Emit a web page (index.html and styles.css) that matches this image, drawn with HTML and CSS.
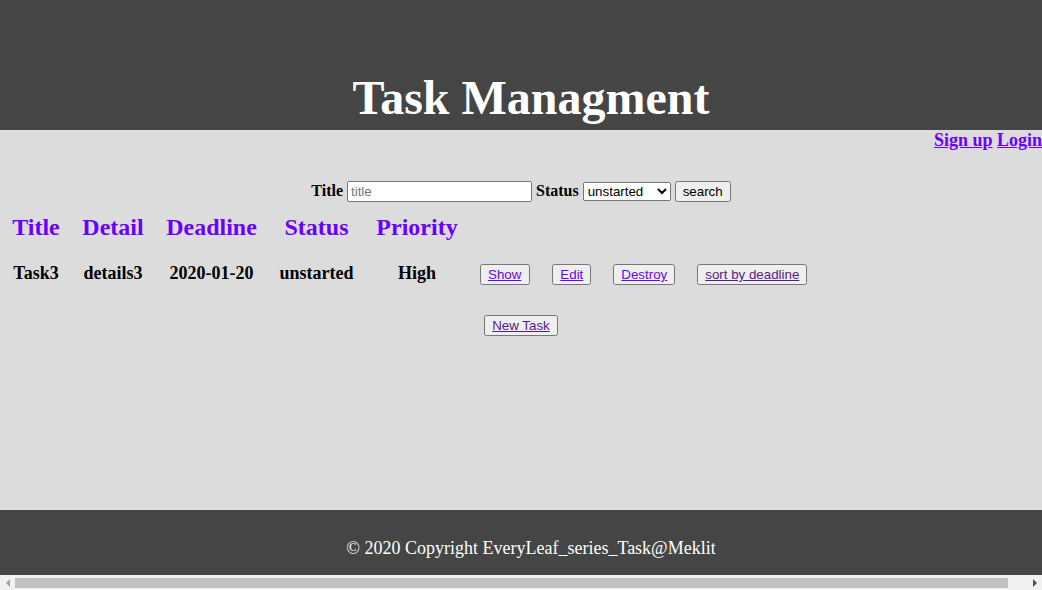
FILE: index.html
```html
<!DOCTYPE html>
<html lang="en">
<head>
<meta charset="utf-8">
<title>Task Managment</title>
<link rel="stylesheet" href="styles.css">
</head>
<body>
<header class="site-header">
  <h1 class="site-title">Task Managment</h1>
</header>
<main class="site-main">
  <nav class="auth-nav"><a href="#" class="auth-link">Sign up</a> <a href="#" class="auth-link">Login</a></nav>
  <form class="search-form">
    <label class="search-label" for="q-title">Title</label> <input id="q-title" class="search-input" type="text" placeholder="title"> <label class="search-label" for="q-status">Status</label> <select id="q-status" class="search-select"><option>unstarted</option><option>started</option><option>completed</option></select> <button type="button" class="search-btn">search</button>
  </form>
  <table class="task-table">
    <colgroup>
      <col class="c-title"><col class="c-detail"><col class="c-deadline"><col class="c-status"><col class="c-priority"><col class="c-actions">
    </colgroup>
    <thead>
      <tr class="head-row">
        <th class="head-cell">Title</th>
        <th class="head-cell">Detail</th>
        <th class="head-cell">Deadline</th>
        <th class="head-cell">Status</th>
        <th class="head-cell">Priority</th>
        <th class="head-cell head-empty"></th>
      </tr>
    </thead>
    <tbody>
      <tr class="data-row">
        <td class="data-cell">Task3</td>
        <td class="data-cell">details3</td>
        <td class="data-cell">2020-01-20</td>
        <td class="data-cell">unstarted</td>
        <td class="data-cell">High</td>
        <td class="data-cell actions-cell">
          <div class="actions">
            <button type="button" class="act-btn row-btn row-btn-first"><span class="btn-link">Show</span></button>
            <button type="button" class="act-btn row-btn"><span class="btn-link">Edit</span></button>
            <button type="button" class="act-btn row-btn"><span class="btn-link">Destroy</span></button>
            <button type="button" class="act-btn row-btn"><span class="btn-link btn-visited">sort by deadline</span></button>
          </div>
        </td>
      </tr>
    </tbody>
  </table>
  <div class="new-wrap">
    <button type="button" class="act-btn"><span class="btn-link btn-visited">New Task</span></button>
  </div>
</main>
<footer class="site-footer">
  <p class="copy">© 2020 Copyright EveryLeaf_series_Task@Meklit</p>
</footer>
<div class="hscroll" aria-hidden="true">
  <span class="hscroll-arrow hscroll-left"></span>
  <span class="hscroll-track"><span class="hscroll-thumb"></span></span>
  <span class="hscroll-arrow hscroll-right"></span>
</div>
</body>
</html>
```

FILE: styles.css
```css
html, body {
  margin: 0;
  padding: 0;
}

body {
  background: #dcdcdc;
  font-family: "Liberation Serif", "Times New Roman", serif;
  color: #000;
}

.site-header {
  background: #454545;
  width: 100%;
  height: 130px;
  padding: 0 10px;
}

.site-title {
  margin: 0;
  padding-top: 70px;
  font-size: 48px;
  line-height: 56px;
  font-weight: bold;
  color: #fff;
  text-align: center;
}

.site-main {
  height: 380px;
}

.auth-nav {
  margin: 0;
  text-align: right;
  font-size: 18px;
  font-weight: bold;
  line-height: 21px;
}

.auth-link {
  color: #6a00ff;
  text-decoration: underline;
}

.search-form {
  margin: 30px 0 0;
  text-align: center;
  font-size: 16px;
}

.search-label {
  font-weight: bold;
}

.search-input {
  box-sizing: border-box;
  width: 185px;
  height: 21px;
  font-family: "Liberation Sans", Arial, sans-serif;
  font-size: 13.33px;
}

.search-input::placeholder {
  color: #757575;
}

.search-select {
  box-sizing: border-box;
  width: 88px;
  font-family: "Liberation Sans", Arial, sans-serif;
  font-size: 13.33px;
}

.search-btn {
  font-family: "Liberation Sans", Arial, sans-serif;
  font-size: 13.33px;
}

.task-table {
  margin: 11px 0 0 8px;
  border-collapse: separate;
  border-spacing: 0;
  table-layout: fixed;
}

.c-title { width: 56px; }
.c-detail { width: 98px; }
.c-deadline { width: 99px; }
.c-status { width: 111px; }
.c-priority { width: 90px; }
.c-actions { width: 400px; }

.head-cell {
  padding: 0;
  font-size: 24px;
  line-height: 28px;
  font-weight: bold;
  color: #6a00ff;
  text-align: center;
  white-space: nowrap;
}

.data-cell {
  padding: 21px 0 0;
  font-size: 18px;
  line-height: 22px;
  font-weight: bold;
  text-align: center;
  vertical-align: baseline;
  white-space: nowrap;
}

.actions-cell {
  text-align: left;
  padding-left: 18px;
}

.actions {
  display: flex;
  gap: 22px;
  align-items: baseline;
}

.act-btn {
  font-family: "Liberation Sans", Arial, sans-serif;
  font-size: 13.33px;
  font-weight: normal;
}

.row-btn-first {
  padding-right: 7px;
}

.btn-link {
  color: #6a00ff;
  text-decoration: underline;
  cursor: pointer;
}

.btn-link.btn-visited {
  color: #551a8b;
}

.new-wrap {
  margin-top: 30px;
  text-align: center;
  font-size: 13px;
}

.site-footer {
  background: #454545;
  width: 100%;
  height: 37px;
  padding: 28px 10px 0;
}

.copy {
  margin: 0;
  font-size: 18px;
  line-height: 21px;
  color: #fff;
  text-align: center;
}

/* classic horizontal scrollbar, drawn over the bottom edge */
.hscroll {
  position: fixed;
  left: 0;
  right: 0;
  bottom: 0;
  height: 15px;
  background: #f1f1f1;
  display: flex;
  align-items: center;
}

.hscroll-arrow {
  width: 15px;
  height: 15px;
  display: flex;
  align-items: center;
  justify-content: center;
  flex: none;
}

.hscroll-left::before {
  content: "";
  border-style: solid;
  border-width: 4px 4px 4px 0;
  border-color: transparent #a3a3a3 transparent transparent;
}

.hscroll-right::before {
  content: "";
  border-style: solid;
  border-width: 4px 0 4px 4px;
  border-color: transparent transparent transparent #505050;
}

.hscroll-track {
  flex: 1;
  height: 15px;
  display: flex;
  align-items: center;
}

.hscroll-thumb {
  width: 993px;
  height: 10px;
  background: #c1c1c1;
}
```
